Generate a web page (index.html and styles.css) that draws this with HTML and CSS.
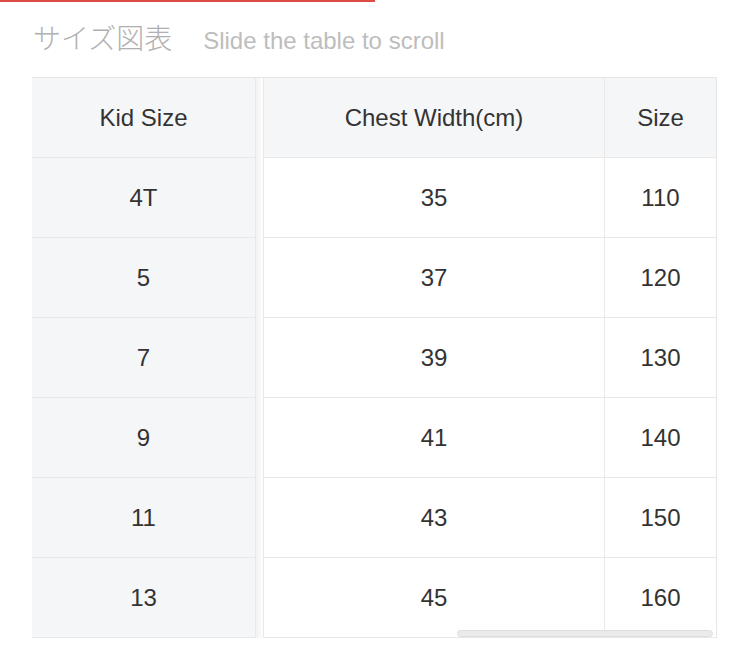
FILE: index.html
```html
<!DOCTYPE html>
<html lang="ja">
<head>
<meta charset="utf-8">
<link rel="stylesheet" href="styles.css">
</head>
<body>
<div class="tabline"></div>
<div class="title">
  <span class="title-jp">サイズ図表</span>
  <span class="title-hint">Slide the table to scroll</span>
</div>
<div class="table-wrap">
  <table class="size-table">
    <thead>
      <tr><th class="c1">Kid Size</th><th class="gap"></th><th class="c2">Chest Width(cm)</th><th class="c3">Size</th></tr>
    </thead>
    <tbody>
      <tr><td class="c1">4T</td><td class="gap"></td><td class="c2">35</td><td class="c3">110</td></tr>
      <tr><td class="c1">5</td><td class="gap"></td><td class="c2">37</td><td class="c3">120</td></tr>
      <tr><td class="c1">7</td><td class="gap"></td><td class="c2">39</td><td class="c3">130</td></tr>
      <tr><td class="c1">9</td><td class="gap"></td><td class="c2">41</td><td class="c3">140</td></tr>
      <tr><td class="c1">11</td><td class="gap"></td><td class="c2">43</td><td class="c3">150</td></tr>
      <tr><td class="c1">13</td><td class="gap"></td><td class="c2">45</td><td class="c3">160</td></tr>
    </tbody>
  </table>
  <div class="scrollbar"></div>
</div>
</body>
</html>
```
FILE: styles.css
```css
html, body {
  margin: 0;
  padding: 0;
  background: #ffffff;
}
body {
  font-family: "Liberation Sans", Arial, "Noto Sans CJK JP", sans-serif;
  color: #333;
}
.tabline {
  width: 375px;
  height: 2px;
  background: #dc4b45;
}
.title {
  display: flex;
  align-items: baseline;
  padding: 15px 0 0 33px;
  height: 60px;
  box-sizing: content-box;
}
.title-jp {
  font-family: "Noto Sans CJK JP", sans-serif;
  font-size: 28px;
  font-weight: 300;
  color: #b0b0b0;
  margin-right: 31px;
}
.title-hint {
  font-size: 24px;
  color: #bdbdbd;
}
.table-wrap {
  position: relative;
  margin-left: 32px;
  width: 685px;
}
.size-table {
  border-collapse: separate;
  border-spacing: 0;
  width: 685px;
  table-layout: fixed;
  border-top: 1px solid #e6e6e6;
}
.size-table th,
.size-table td {
  height: 79px;
  padding: 0;
  text-align: center;
  vertical-align: middle;
  font-size: 24px;
  font-weight: normal;
  color: #333;
  border-bottom: 1px solid #e8e8e8;
}
.size-table th {
  background: #f5f6f8;
}
.size-table .c1 {
  width: 223px;
  background: #f5f6f8;
  border-right: 1px solid #e9e9e9;
}
.size-table .gap {
  width: 7px;
  border-bottom: none;
  background: linear-gradient(to right, #f3f3f3, #fdfdfd);
}
.size-table .c2 {
  width: 340px;
  border-left: 1px solid #e9e9e9;
  border-right: 1px solid #e9e9e9;
}
.size-table .c3 {
  border-right: 1px solid #e6e6e6;
}
.scrollbar {
  position: absolute;
  left: 425px;
  bottom: 1px;
  width: 254px;
  height: 5px;
  border-radius: 4px;
  background: #ebebeb;
  border: 1px solid #dedede;
}
```
